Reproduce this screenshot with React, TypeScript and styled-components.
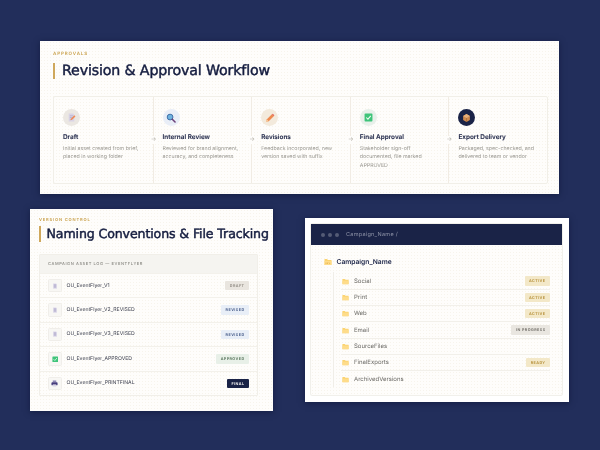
import React from "react";
import styled, { createGlobalStyle } from "styled-components";

const Global = createGlobalStyle`
  html, body { margin: 0; padding: 0; width: 600px; height: 450px; overflow: hidden; background: #222e5b; }
  * { box-sizing: border-box; }
`;
const Page = styled.div`
  width: 600px; height: 450px; padding-top: 41px; background: #222e5b;
  font-family: Inter, "Liberation Sans", sans-serif; color: #1a2347;
  text-rendering: geometricPrecision;
  filter: blur(0.4px);
`;
const dots = `background-color: #fefdfb; background-image: radial-gradient(#f7f4ec 0.5px, transparent 0.6px); background-size: 3px 3px;`;
const Card = styled.section`
  ${dots}
  box-shadow: 0 1px 6px rgba(10, 16, 45, .55);
`;
const WorkflowCard = styled(Card)`
  width: 519px; height: 153px; margin-left: 40px; padding: 10px 11px 10px 13px;
`;
const BottomRow = styled.div`
  display: flex; align-items: center; gap: 32px; margin-top: 15px; padding-left: 30px;
`;
const Eyebrow = styled.div<{ $size: number }>`
  font-size: ${p => p.$size}px; line-height: 7px; font-weight: 600; letter-spacing: .2em; color: #c9a14c; white-space: nowrap;
`;
const Title = styled.h1<{ $size: number; $h: number; $gap: number; $top: number }>`
  margin: ${p => p.$top}px 0 0; font-family: "DejaVu Sans", sans-serif; font-weight: 500; color: #141c3f; white-space: nowrap;
  font-size: ${p => p.$size}px; line-height: ${p => p.$h}px; padding-left: ${p => p.$gap}px;
  border-left: 2px solid #cfa85c; letter-spacing: -.01em; -webkit-text-stroke: .45px #141c3f;
`;
const Steps = styled.div`
  display: grid; grid-template-columns: repeat(5, 1fr); width: 495px; height: 88px; margin-top: 17px;
  border: 1px solid #f1efe8; border-radius: 2px;
`;
const Step = styled.div`
  position: relative; padding: 12px 6px 0 9px;
  & + & { border-left: 1px solid #f1ece4; }
`;
const Arrow = styled.span`
  position: absolute; left: -4px; top: 39px; width: 8px; height: 8px; text-align: center;
  font-size: 6px; line-height: 8px; color: #b8b5ab; background: #fefdfb;
`;
const Disc = styled.div<{ $bg: string }>`
  width: 17px; height: 17px; border-radius: 50%; background: ${p => p.$bg};
  display: flex; align-items: center; justify-content: center;
`;
const StepName = styled.div`
  margin-top: 7px; font-size: 6.4px; line-height: 8px; font-weight: 600; color: #262d4d; white-space: nowrap;
  -webkit-text-stroke: .1px #262d4d;
`;
const StepText = styled.p`
  margin: 4px 0 0; font-size: 5.25px; line-height: 8.3px; color: #96948d; white-space: nowrap;
`;
const LogCard = styled(Card)`
  width: 243px; height: 202px; padding: 7px 0 0 9px;
`;
const LogTable = styled.div`
  width: 219px; margin-top: 12px; border: 1px solid #f1efe9; border-radius: 1px;
`;
const LogHeader = styled.div`
  height: 18px; padding-left: 8px; background: #f5f4f0; font-size: 4.05px; line-height: 18px;
  letter-spacing: .14em; font-weight: 500; color: #8b8a84; white-space: nowrap;
`;
const LogRow = styled.div`
  display: flex; align-items: center; height: 24.4px; padding: 0 8px;
  border-top: 1px solid #f3f1eb;
`;
const FileIcon = styled.div`
  width: 13.5px; height: 13.5px; border: 1px solid #f0eeea; border-radius: 1.5px; background: #f8f7f4;
  display: flex; align-items: center; justify-content: center; margin-right: 5px;
`;
const FileName = styled.div`
  flex: 1; font-size: 5.15px; color: #3a3d4c; white-space: nowrap;
`;
const Badge = styled.span<{ $bg: string; $fg: string }>`
  display: inline-block; height: 9.5px; padding: 0 4.5px; border-radius: 1px;
  font-size: 3.7px; line-height: 9.5px; font-weight: 700; letter-spacing: .12em; white-space: nowrap;
  background: ${p => p.$bg}; color: ${p => p.$fg};
`;
const FolderCard = styled(Card)`
  width: 264px; height: 184px; padding: 6px 7px 7px 6px; background: #fff;
`;
const Explorer = styled.div`
  ${dots}
  height: 171px; border-radius: 1.5px; box-shadow: 0 0 0 1px #f1f0eb;
`;
const Bar = styled.div`
  display: flex; align-items: center; height: 21px; padding-left: 10px; gap: 3px; background: #1a2347;
`;
const Dot = styled.i`
  width: 4px; height: 4px; border-radius: 50%; background: #545b75;
`;
const Path = styled.span`
  margin-left: 4px; font-size: 5.5px; letter-spacing: .05em; color: #8f94a8;
`;
const RootLine = styled.div`
  display: flex; align-items: center; gap: 4.5px; margin: 12px 0 0 13px; height: 9px;
  font-size: 6.7px; font-weight: 600; color: #1a2347;
`;
const Tree = styled.div`
  margin: 5.5px 12px 0 22px; padding: 2px 0 0 7px; height: 115px; border-left: 1px solid #f0eee8;
`;
const TreeRow = styled.div<{ $last?: boolean }>`
  display: flex; align-items: center; gap: 5px; height: 16.3px; padding-left: 1px;
  border-bottom: ${p => (p.$last ? "none" : "1px solid #f2f0ea")};
`;
const TreeName = styled.span`
  flex: 1; font-size: 6px; color: #6b6a66; white-space: nowrap;
`;

const DraftIcon = () => (
  <svg width="9" height="9" viewBox="0 0 16 16">
    <path d="M3 1h8l2 2v12H3z" fill="#d9d4e6" /><path d="M5 5h6M5 8h6M5 11h4" stroke="#a89fc0" />
    <path d="M6 13l1-3 6-6 2 2-6 6z" fill="#ef8a55" />
  </svg>
);
const SearchIcon = () => (
  <svg width="10" height="10" viewBox="0 0 16 16">
    <circle cx="6.5" cy="6.5" r="4.6" fill="#6fb3df" stroke="#3f6fa8" strokeWidth="1.6" />
    <path d="M10 10l4.5 4.5" stroke="#6b3f78" strokeWidth="2.4" strokeLinecap="round" />
  </svg>
);
const PencilIcon = () => (
  <svg width="10" height="10" viewBox="0 0 16 16">
    <path d="M2 14l1-4 8-8 3 3-8 8z" fill="#ee8a50" /><path d="M11 2l3 3 1-1.500L12.500 1z" fill="#e0645a" />
    <path d="M2 14l1-4 3 3z" fill="#f5cfa0" />
  </svg>
);
const CheckIcon = ({ size = 9 }: { size?: number }) => (
  <svg width={size} height={size} viewBox="0 0 16 16">
    <rect x="1" y="1" width="14" height="14" rx="1.500" fill="#3fc47a" />
    <path d="M4 8l3 3 5-6" fill="none" stroke="#f2fff6" strokeWidth="1.800" />
  </svg>
);
const BoxIcon = () => (
  <svg width="9" height="10" viewBox="0 0 16 16">
    <path d="M8 1l6 3.500v7L8 15l-6-3.500v-7z" fill="#cf8a4e" />
    <path d="M2 4.500L8 8l6-3.500L8 1z" fill="#e6b07c" /><path d="M8 8v7" stroke="#99602f" />
  </svg>
);
const DocIcon = () => (
  <svg width="6" height="6" viewBox="0 0 16 16">
    <path d="M3 1h8l2 2v12H3z" fill="#dcd8ea" /><path d="M5 5h6M5 8h6M5 11h6" stroke="#9c94ba" strokeWidth="1.500" />
  </svg>
);
const PrintIcon = () => (
  <svg width="7" height="7" viewBox="0 0 16 16">
    <path d="M4 1h8v4H4z" fill="#8f88b5" /><rect x="1" y="5" width="14" height="7" rx="2" fill="#453c7c" />
    <path d="M4 10h8v5H4z" fill="#d9d6e6" />
  </svg>
);
const Folder = ({ size = 7, open }: { size?: number; open?: boolean }) => (
  <svg width={size} height={size} viewBox="0 0 16 16">
    <path d="M1 2h5l2 2h7v10H1z" fill="#fbd36f" />
    <path d="M1 6h14v8H1z" fill="#fedc8a" />
    {open && <path d="M4 9v3M7 9v3M10 9l2 3" stroke="#e0a83a" strokeWidth="1.200" />}
  </svg>
);

const steps = [
  { name: "Draft", bg: "#ebe7e2", icon: <DraftIcon />, text: ["Initial asset created from brief,", "placed in working folder"] },
  { name: "Internal Review", bg: "#e9eef7", icon: <SearchIcon />, text: ["Reviewed for brand alignment,", "accuracy, and completeness"] },
  { name: "Revisions", bg: "#f3eadc", icon: <PencilIcon />, text: ["Feedback incorporated, new", "version saved with suffix"] },
  { name: "Final Approval", bg: "#e8f0ea", icon: <CheckIcon />, text: ["Stakeholder sign-off", "documented, file marked", "APPROVED"] },
  { name: "Export Delivery", bg: "#1a2347", icon: <BoxIcon />, text: ["Packaged, spec-checked, and", "delivered to team or vendor"] },
];
const blue = { $bg: "#e8eef7", $fg: "#4a5f8c" };
const files = [
  { name: "OU_EventFlyer_V1", icon: <DocIcon />, label: "DRAFT", tone: { $bg: "#e9e5df", $fg: "#96918a" } },
  { name: "OU_EventFlyer_V2_REVISED", icon: <DocIcon />, label: "REVISED", tone: blue },
  { name: "OU_EventFlyer_V3_REVISED", icon: <DocIcon />, label: "REVISED", tone: blue },
  { name: "OU_EventFlyer_APPROVED", icon: <CheckIcon size={6.500} />, label: "APPROVED", tone: { $bg: "#e8f0e8", $fg: "#5e7a62" } },
  { name: "OU_EventFlyer_PRINTFINAL", icon: <PrintIcon />, label: "FINAL", tone: { $bg: "#1a2347", $fg: "#f2f2f2" } },
];
const amber = { $bg: "#f3e8c8", $fg: "#b8933e" };
const folders: { name: string; label?: string; tone?: { $bg: string; $fg: string } }[] = [
  { name: "Social", label: "ACTIVE", tone: amber },
  { name: "Print", label: "ACTIVE", tone: amber },
  { name: "Web", label: "ACTIVE", tone: amber },
  { name: "Email", label: "IN PROGRESS", tone: { $bg: "#e9e6e0", $fg: "#77746e" } },
  { name: "SourceFiles" },
  { name: "FinalExports", label: "READY", tone: amber },
  { name: "ArchivedVersions" },
];

export default function App() {
  return (
    <Page>
      <Global />
      <WorkflowCard>
        <Eyebrow $size={4.5}>APPROVALS</Eyebrow>
        <Title $size={14.2} $h={16} $gap={7} $top={5}>Revision &amp; Approval Workflow</Title>
        <Steps>
          {steps.map((s, i) => (
            <Step key={s.name}>
              {i > 0 && <Arrow>→</Arrow>}
              <Disc $bg={s.bg}>{s.icon}</Disc>
              <StepName>{s.name}</StepName>
              <StepText>{s.text.map(t => <React.Fragment key={t}>{t}<br /></React.Fragment>)}</StepText>
            </Step>
          ))}
        </Steps>
      </WorkflowCard>
      <BottomRow>
        <LogCard>
          <Eyebrow $size={4.1}>VERSION CONTROL</Eyebrow>
          <Title $size={12.6} $h={16} $gap={5.5} $top={3}>Naming Conventions &amp; File Tracking</Title>
          <LogTable>
            <LogHeader>CAMPAIGN ASSET LOG — EVENTFLYER</LogHeader>
            {files.map(f => (
              <LogRow key={f.name}>
                <FileIcon>{f.icon}</FileIcon>
                <FileName>{f.name}</FileName>
                <Badge {...f.tone}>{f.label}</Badge>
              </LogRow>
            ))}
          </LogTable>
        </LogCard>
        <FolderCard>
          <Explorer>
            <Bar>
              <Dot /><Dot /><Dot />
              <Path>Campaign_Name /</Path>
            </Bar>
            <RootLine><Folder size={8} open />Campaign_Name</RootLine>
            <Tree>
              {folders.map((f, i) => (
                <TreeRow key={f.name} $last={i === folders.length - 1}>
                  <Folder />
                  <TreeName>{f.name}</TreeName>
                  {f.label && <Badge {...f.tone!}>{f.label}</Badge>}
                </TreeRow>
              ))}
            </Tree>
          </Explorer>
        </FolderCard>
      </BottomRow>
    </Page>
  );
}
